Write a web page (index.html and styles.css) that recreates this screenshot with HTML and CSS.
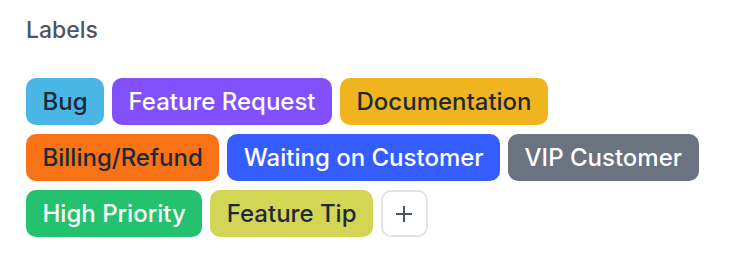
FILE: index.html
```html
<!DOCTYPE html>
<html>
<head>
  <meta charset="UTF-8">
  <title>Labels</title>
  <link rel="stylesheet" href="styles.css">
</head>
<body>

<div class="labels-panel">
  <h3 class="panel-title">Labels</h3>

  <div class="label-list">
    <span class="label label-bug">Bug</span>
    <span class="label label-feature">Feature Request</span>
    <span class="label label-docs">Documentation</span>
    <span class="label label-billing">Billing/Refund</span>
    <span class="label label-waiting">Waiting on Customer</span>
    <span class="label label-vip">VIP Customer</span>
    <span class="label label-priority">High Priority</span>
    <span class="label label-tip">Feature Tip</span>
    <!-- add new label -->
    <button class="add-label" type="button" aria-label="Add label">
      <svg width="18" height="18" viewBox="0 0 18 18">
        <path d="M9 1v16M1 9h16" stroke="#4b5563" stroke-width="2" fill="none"/>
      </svg>
    </button>
  </div>
</div>

</body>
</html>
```

FILE: styles.css
```css
body {
  margin: 0;
  background: #ffffff;
  font-family: Inter, "Liberation Sans", sans-serif;
}

.labels-panel {
  padding: 16px 26px;
}

.panel-title {
  margin: 0 0 34px 0;
  font-size: 23px;
  line-height: 28px;
  font-weight: 500;
  color: #4b5563;
}

.label-list {
  display: flex;
  flex-wrap: wrap;
  column-gap: 8px;
  row-gap: 9px;
  max-width: 680px;
}

.label {
  display: inline-block;
  height: 47px;
  line-height: 47px;
  padding: 0 16.5px;
  border-radius: 10px;
  font-size: 24px;
  font-weight: 500;
  color: #1f2937;
  box-sizing: border-box;
}

.label-bug { background: #4ab6e6; }
.label-feature { background: #8250fb; color: #ffffff; }
.label-docs { background: #f0b51e; }
.label-billing { background: #f97316; }
.label-waiting { background: #355cfe; color: #ffffff; }
.label-vip { background: #6b7280; color: #ffffff; }
.label-priority { background: #24c26e; color: #ffffff; }
.label-tip { background: #d3d655; }

.add-label {
  width: 47px;
  height: 47px;
  padding: 0;
  border: 2px solid #e2e3e8;
  border-radius: 10px;
  background: #ffffff;
  display: flex;
  align-items: center;
  justify-content: center;
  cursor: pointer;
}
```
